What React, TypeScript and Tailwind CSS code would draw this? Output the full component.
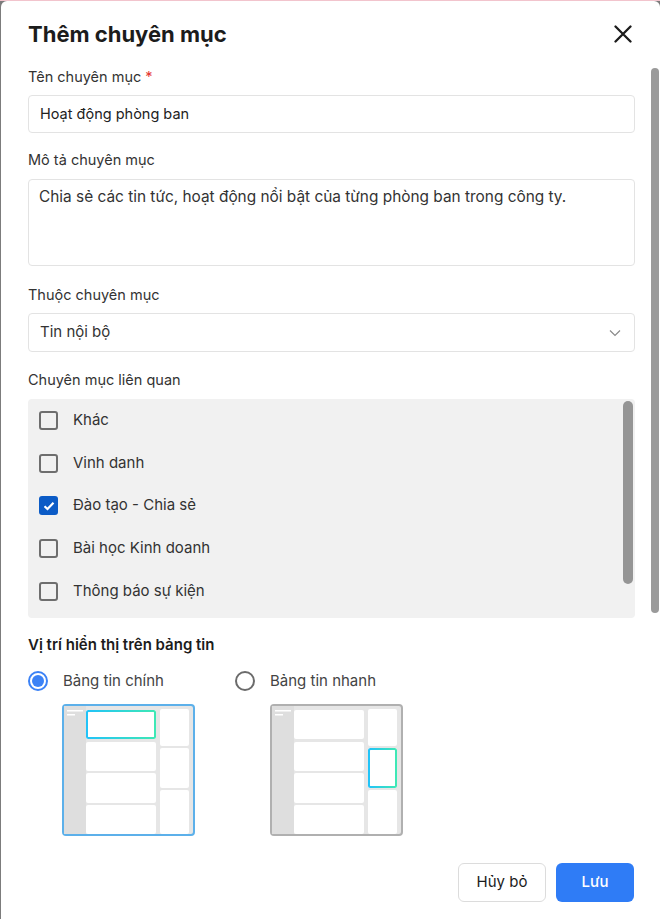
import React from "react";

const categories = [
  { name: "Khác", checked: false },
  { name: "Vinh danh", checked: false },
  { name: "Đào tạo - Chia sẻ", checked: true },
  { name: "Bài học Kinh doanh", checked: false },
  { name: "Thông báo sự kiện", checked: false },
];

const Preview = ({ active, highlight }: { active: boolean; highlight: "main" | "side" }) => {
  const gid = highlight === "main" ? "g-main" : "g-side";
  return (
    <svg width="133" height="132" viewBox="0 0 133 132">
      <defs>
        <linearGradient id={gid} x1="0" y1="0" x2="1" y2="0">
          <stop offset="0" stopColor="#22c3f8" />
          <stop offset="1" stopColor="#3ee8b5" />
        </linearGradient>
      </defs>
      <rect x="1" y="1" width="131" height="130" rx="3" fill="#e6e6e6" stroke={active ? "#5cb0ea" : "#b0b0b0"} strokeWidth="2" />
      <rect x="2" y="2" width="22" height="128" fill="#dedede" />
      <rect x="5" y="6" width="16" height="1.5" fill="#ffffff" />
      <rect x="5" y="10" width="8" height="1.5" fill="#ffffff" />
      <rect x="24" y="6" width="70" height="29" rx="2" fill="#ffffff" />
      <rect x="24" y="38" width="70" height="29" rx="2" fill="#ffffff" />
      <rect x="24" y="69" width="70" height="30" rx="2" fill="#ffffff" />
      <rect x="24" y="101" width="70" height="29" rx="2" fill="#ffffff" />
      <rect x="98" y="5" width="29" height="37" rx="2" fill="#ffffff" />
      <rect x="98" y="44" width="29" height="40" rx="2" fill="#ffffff" />
      <rect x="98" y="86" width="29" height="44" rx="2" fill="#ffffff" />
      {highlight === "main" ? (
        <rect x="25" y="7" width="68" height="27" rx="1.5" fill="none" stroke={`url(#${gid})`} strokeWidth="2" />
      ) : (
        <rect x="99" y="45" width="27" height="38" rx="1.5" fill="none" stroke={`url(#${gid})`} strokeWidth="2" />
      )}
    </svg>
  );
};

const Radio = ({ checked }: { checked: boolean }) =>
  checked ? (
    <span className="flex h-5 w-5 items-center justify-center rounded-full border-2 border-[#3b82f6]">
      <span className="h-3 w-3 rounded-full bg-[#3b82f6]" />
    </span>
  ) : (
    <span className="h-5 w-5 rounded-full border-2 border-[#6b6b6b]" />
  );

export default function App() {
  return (
    <div className="h-[919px] w-[660px] overflow-hidden border-t border-[#f2c4cd] bg-[#7c7c7c] pl-px font-[Inter,'Noto_Sans',sans-serif]">
      <div className="relative h-[918px] w-[659px] rounded-tl-md rounded-tr-md bg-white">
        {/* header */}
        <div className="flex items-center justify-between pl-[27px] pr-[25px] pt-[19px]">
          <h1 className="text-[22px] font-bold leading-7 text-[#1c1c1c]">Thêm chuyên mục</h1>
          <button className="flex h-6 w-6 items-center justify-center text-[#1c1c1c]">
            <svg width="18" height="18" viewBox="0 0 18 18">
              <path d="M1.5 1.5L16.5 16.5M16.5 1.5L1.5 16.5" stroke="currentColor" strokeWidth="2.3" strokeLinecap="round" />
            </svg>
          </button>
        </div>

        {/* body */}
        <div className="mt-[19px] flex flex-col pl-[27px] pr-[25px] text-[15px]">
          <label className="h-5 text-[14.5px] leading-5 text-[#333]">
            Tên chuyên mục <span className="text-[#e53935]">*</span>
          </label>
          <div className="mt-2 flex h-[38px] items-center rounded border border-[#e3e3e3] px-[11px] text-[14.5px] text-[#222]">
            Hoạt động phòng ban
          </div>

          <label className="mt-[17px] h-5 text-[14.5px] leading-5 text-[#333]">Mô tả chuyên mục</label>
          <div className="mt-[9px] h-[87px] rounded border border-[#e3e3e3] px-[10px] pt-[7px] text-[15.4px] leading-5 text-[#333]">
            Chia sẻ các tin tức, hoạt động nổi bật của từng phòng ban trong công ty.
          </div>

          <label className="mt-[19px] h-5 text-[14.5px] leading-5 text-[#333]">Thuộc chuyên mục</label>
          <div className="mt-2 flex h-[39px] items-center justify-between rounded border border-[#e3e3e3] pl-[11px] pr-[13px] text-[#333]">
            <span>Tin nội bộ</span>
            <svg width="12" height="8" viewBox="0 0 12 8">
              <path d="M1 1.5L6 6.5L11 1.5" fill="none" stroke="#8a8a8a" strokeWidth="1.2" />
            </svg>
          </div>

          <label className="mt-[18px] h-5 text-[14.5px] leading-5 text-[#333]">Chuyên mục liên quan</label>
          <div className="relative mt-[9px] h-[219px] overflow-hidden rounded bg-[#f1f1f1] pl-[11px]">
            {categories.map((c) => (
              <div key={c.name} className="flex h-[42.7px] items-center gap-[15px] text-[#333]">
                {c.checked ? (
                  <span className="flex h-[19px] w-[19px] items-center justify-center rounded-[3px] bg-[#0b5bc6]">
                    <svg width="12" height="10" viewBox="0 0 12 10">
                      <path d="M1.5 5.2L4.5 8L10.5 1.8" fill="none" stroke="#fff" strokeWidth="2.2" />
                    </svg>
                  </span>
                ) : (
                  <span className="h-[19px] w-[19px] rounded-[3px] border-2 border-[#6e6e6e]" />
                )}
                <span>{c.name}</span>
              </div>
            ))}
            <div className="absolute right-[2px] top-[2px] h-[183px] w-[10px] rounded-full bg-[#959595]" />
          </div>

          <h2 className="mt-[17px] text-[15px] font-semibold leading-5 text-[#1c1c1c]">Vị trí hiển thị trên bảng tin</h2>
          <div className="mt-[16px] flex">
            <div className="flex w-[207px] flex-col">
              <div className="flex h-5 items-center gap-[15px] text-[#444]">
                <Radio checked />
                <span>Bảng tin chính</span>
              </div>
              <div className="ml-[34px] mt-[13px]">
                <Preview active highlight="main" />
              </div>
            </div>
            <div className="flex w-[207px] flex-col">
              <div className="flex h-5 items-center gap-[15px] text-[#444]">
                <Radio checked={false} />
                <span>Bảng tin nhanh</span>
              </div>
              <div className="ml-[35px] mt-[13px]">
                <Preview active={false} highlight="side" />
              </div>
            </div>
          </div>

          <div className="mt-[27px] flex justify-end gap-[10px] pr-px">
            <button className="h-[39px] w-[88px] rounded-md border border-[#dcdcdc] bg-white text-[15px] text-[#1c1c1c]">
              Hủy bỏ
            </button>
            <button className="h-[39px] w-[78px] rounded-md bg-[#2f7cf6] text-[15px] font-medium text-white">Lưu</button>
          </div>
        </div>

        {/* modal body scrollbar */}
        <div className="absolute left-[650px] top-[67px] h-[545px] w-[8px] rounded-full bg-[#9a9a9a]" />
      </div>
    </div>
  );
}
